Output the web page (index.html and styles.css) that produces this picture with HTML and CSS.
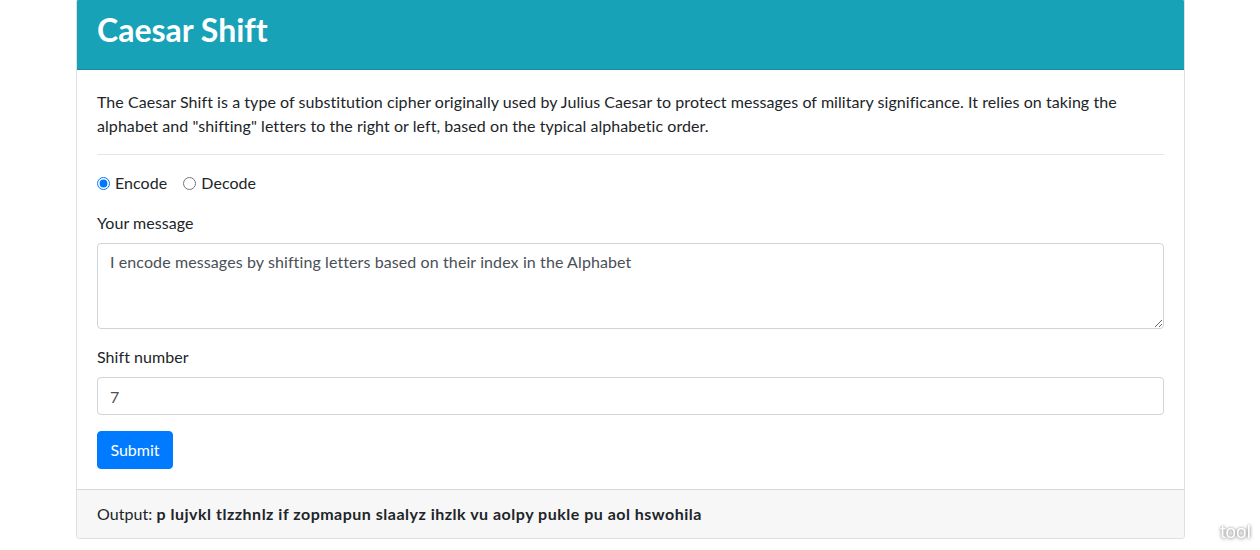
FILE: index.html
```html
<!DOCTYPE html>
<html lang="en">
<head>
<meta charset="utf-8">
<title>Caesar Shift</title>
<link rel="stylesheet" href="styles.css">
</head>
<body>
<div class="page">
  <div class="card">
    <div class="card-header">
      <h2 class="card-title">Caesar Shift</h2>
    </div>
    <div class="card-body">
      <p class="intro">The Caesar Shift is a type of substitution cipher originally used by Julius Caesar to protect messages of military significance. It relies on taking the alphabet and "shifting" letters to the right or left, based on the typical alphabetic order.</p>
      <hr class="divider">
      <form class="form">
        <div class="radio-row">
          <label class="radio-item"><input type="radio" name="mode" value="encode" checked> Encode</label>
          <label class="radio-item"><input type="radio" name="mode" value="decode"> Decode</label>
        </div>
        <div class="form-group">
          <label class="field-label" for="msg">Your message</label>
          <textarea id="msg" class="form-control textarea" rows="3">I encode messages by shifting letters based on their index in the Alphabet</textarea>
        </div>
        <div class="form-group">
          <label class="field-label" for="shift">Shift number</label>
          <input id="shift" class="form-control" type="text" value="7">
        </div>
        <button type="button" class="btn">Submit</button>
      </form>
    </div>
    <div class="card-footer">Output: <strong class="output">p lujvkl tlzzhnlz if zopmapun slaalyz ihzlk vu aolpy pukle pu aol hswohila</strong></div>
  </div>
</div>
<span class="watermark">tool</span>
</body>
</html>
```
FILE: styles.css
```css
* { box-sizing: border-box; }
html, body { margin: 0; padding: 0; background: #fff; }
body {
  font-family: Lato, "Liberation Sans", sans-serif;
  font-size: 16px;
  line-height: 1.5;
  color: #212529;
  letter-spacing: 0.06px;
  font-variant-ligatures: none;
}
.page {
  width: 1109px;
  margin: -2px 0 0 76px;
}
.card {
  border: 1px solid rgba(0,0,0,.125);
  border-radius: 4px;
  background: #fff;
  overflow: hidden;
}
.card-header {
  background: #17a2b8;
  color: #fff;
  padding: 12px 20px;
  border-bottom: 1px solid rgba(0,0,0,.125);
}
.card-title {
  margin: 0 0 8px;
  font-size: 32px;
  font-weight: 700;
  line-height: 1.2;
  letter-spacing: 0;
}
.card-body { padding: 20px; }
.intro { margin: 0 0 16px; }
.divider {
  margin: 16px 0;
  border: 0;
  border-top: 1px solid rgba(0,0,0,.1);
  height: 0;
}
.form { margin: 0; }
.radio-row {
  display: flex;
  gap: 16px;
  margin-bottom: 16px;
}
.radio-item {
  display: inline-flex;
  align-items: center;
}
.radio-item input {
  margin: 0 5px 0 0;
  width: 13px;
  height: 13px;
}
.form-group { margin-bottom: 16px; }
.field-label {
  display: inline-block;
  margin-bottom: 8px;
}
.form-control {
  display: block;
  width: 100%;
  height: 38px;
  padding: 6px 12px;
  font-family: inherit;
  font-size: 16px;
  line-height: 1.5;
  letter-spacing: 0.1px;
  font-variant-ligatures: none;
  color: #495057;
  background: #fff;
  border: 1px solid #ced4da;
  border-radius: 4px;
  margin: 0;
}
.textarea { height: 86px; resize: vertical; }
.btn {
  display: inline-block;
  font-family: inherit;
  font-size: 16px;
  line-height: 1.5;
  padding: 6px 12px;
  color: #fff;
  background: #007bff;
  border: 1px solid #007bff;
  border-radius: 4px;
  height: 38px;
  min-width: 76px;
}
.card-footer {
  background: #f7f7f7;
  padding: 12px 20px;
  border-top: 1px solid rgba(0,0,0,.125);
}
.output { font-weight: 700; letter-spacing: 0.5px; }
.watermark {
  position: fixed;
  right: 9px;
  bottom: 9px;
  font-family: "Liberation Sans", sans-serif;
  font-size: 19px;
  line-height: 1;
  color: #fff;
  text-shadow: 0 0 3px rgba(0,0,0,.45), 0 1px 4px rgba(0,0,0,.3);
}
```
